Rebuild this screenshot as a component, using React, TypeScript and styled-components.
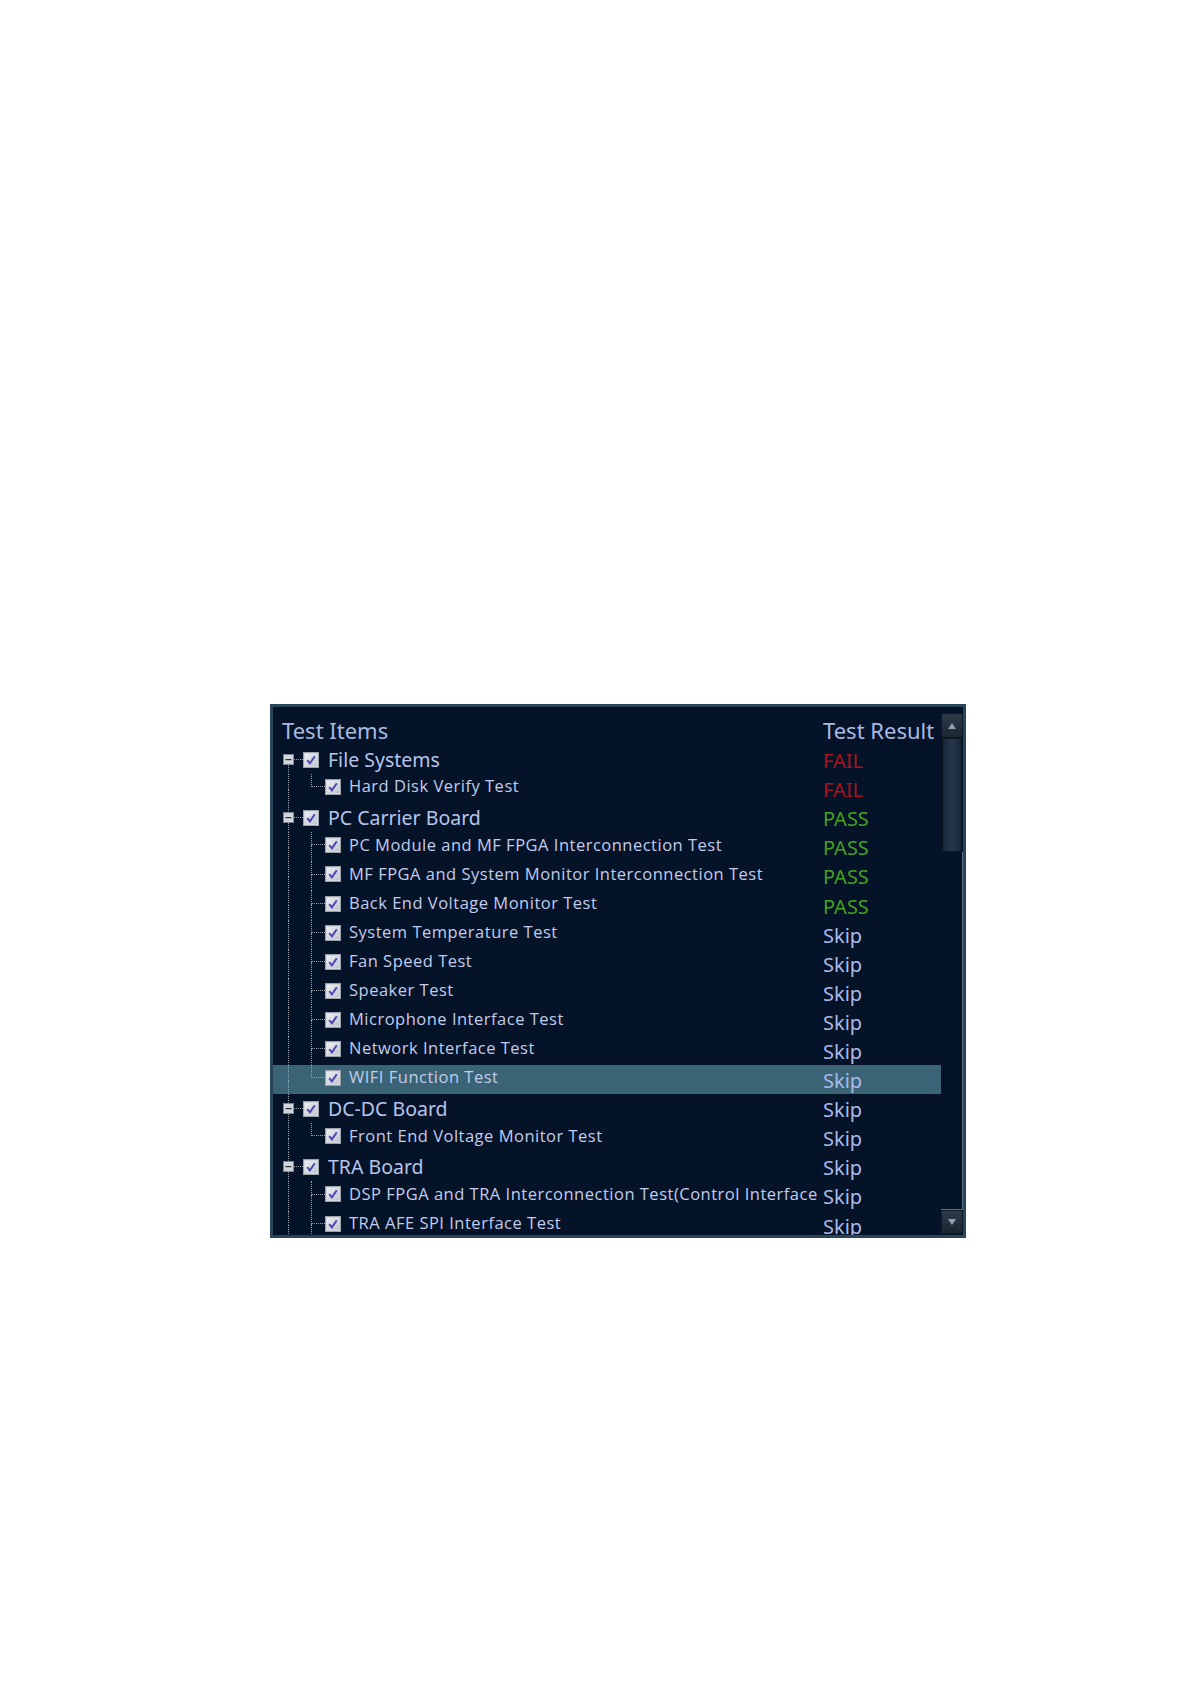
import styled, { createGlobalStyle } from "styled-components";

const LINE = "#9aa1aa";

const GlobalStyle = createGlobalStyle`
  html, body {
    margin: 0;
    background: #ffffff;
  }
  body {
    font-family: "Noto Sans", "Open Sans", sans-serif;
  }
`;

const Page = styled.div`
  box-sizing: border-box;
  min-height: 1684px;
  padding: 704px 0 0 270px;
`;

const Panel = styled.div`
  box-sizing: border-box;
  width: 696px;
  height: 534px;
  display: flex;
  border: 3px solid #2b4558;
  background: #051328;
  overflow: hidden;
`;

const List = styled.div`
  flex: 1;
  min-width: 0;
  padding-top: 8px;
  overflow: hidden;
`;

const HeaderRow = styled.div`
  display: grid;
  grid-template-columns: 550px 1fr;
  height: 30px;
  align-items: center;
  font-size: 22px;
  color: #a9bae2;
  white-space: nowrap;
`;

const HeaderCell = styled.div<{ $pad?: number }>`
  padding-left: ${(p) => p.$pad ?? 0}px;
`;

const Row = styled.div<{ $selected?: boolean }>`
  display: grid;
  grid-template-columns: 550px 1fr;
  height: 29.1px;
  background: ${(p) => (p.$selected ? "#3a6476" : "transparent")};
`;

const Tree = styled.div`
  display: flex;
  align-items: stretch;
  min-width: 0;
  overflow: hidden;
  white-space: nowrap;
`;

const Lane = styled.div<{ $w: number }>`
  flex: none;
  width: ${(p) => p.$w}px;
  display: flex;
  flex-direction: column;
`;

const Stub = styled.div<{ $x: number; $line: boolean; $branch?: boolean; $grow?: number }>`
  flex: ${(p) => p.$grow ?? 1};
  margin-left: ${(p) => p.$x}px;
  border-left: 1px dotted ${(p) => (p.$line ? LINE : "transparent")};
  border-bottom: 1px dotted ${(p) => (p.$branch ? LINE : "transparent")};
`;

const BoxLine = styled.div`
  flex: none;
  height: 11px;
  display: flex;
  align-items: center;
  padding-left: 10px;
`;

const Connector = styled.div`
  flex: 1;
  height: 0;
  border-top: 1px dotted ${LINE};
`;

const Check = styled.span<{ $lift?: number }>`
  flex: none;
  align-self: center;
  display: flex;
  padding-bottom: ${(p) => p.$lift ?? 0}px;
`;

const GroupLabel = styled.span`
  align-self: center;
  margin-left: 9px;
  font-size: 19.5px;
  color: #b7c5ec;
  line-height: 1;
`;

const ItemLabel = styled.span`
  align-self: center;
  margin-left: 8px;
  padding-bottom: 4px;
  font-family: "Open Sans", "Noto Sans", sans-serif;
  font-size: 16.5px;
  letter-spacing: 0.5px;
  color: #c2ccec;
  line-height: 1;
`;

type Status = "FAIL" | "PASS" | "Skip";

const statusColor: Record<Status, string> = {
  FAIL: "#a8131c",
  PASS: "#46a01f",
  Skip: "#aabaea",
};

const Result = styled.div<{ $status: Status }>`
  display: flex;
  align-items: center;
  padding-top: 3px;
  font-size: 20px;
  line-height: 1;
  color: ${(p) => statusColor[p.$status]};
  white-space: nowrap;
`;

const Scroll = styled.div`
  box-sizing: border-box;
  flex: none;
  width: 22px;
  display: flex;
  flex-direction: column;
  padding: 6px 0 1px;
`;

const ArrowBtn = styled.div<{ $h: number }>`
  flex: none;
  height: ${(p) => p.$h}px;
  display: flex;
  align-items: center;
  justify-content: center;
  background: linear-gradient(#2c3b48, #1a2531);
  border: 1px solid #101a24;
  border-radius: 2px;
  box-sizing: border-box;
`;

const Thumb = styled.div`
  flex: none;
  height: 114px;
  margin: 0 1px;
  border-radius: 3px;
  background: linear-gradient(to right, #172431, #26364a 50%, #172431);
  box-shadow: inset 0 0 0 1px #0d1721;
`;

const Track = styled.div`
  flex: 1;
  border-right: 1px solid #5d7080;
  border-bottom: 1px solid #5d7080;
`;

const CheckIcon = () => (
  <svg width="16" height="16" viewBox="0 0 16 16">
    <defs>
      <linearGradient id="cbfill" x1="0" y1="0" x2="1" y2="1">
        <stop offset="0" stopColor="#eef0f4" />
        <stop offset="1" stopColor="#bfc4ce" />
      </linearGradient>
    </defs>
    <rect x="0.5" y="0.5" width="15" height="15" fill="#d4d8df" stroke="#9ba1ab" />
    <rect x="2" y="2" width="12" height="12" fill="url(#cbfill)" />
    <path d="M4.2 8.2 L6.9 11.3 L11.8 4.2" fill="none" stroke="#4d46b2" strokeWidth="2" />
  </svg>
);

const MinusIcon = () => (
  <svg width="11" height="11" viewBox="0 0 11 11">
    <rect x="0.5" y="0.5" width="10" height="10" fill="#d2d6dd" stroke="#7e8693" />
    <rect x="2.5" y="5" width="6" height="1.2" fill="#27303c" />
  </svg>
);

const Arrow = ({ down }: { down?: boolean }) => (
  <svg width="8" height="6" viewBox="0 0 8 6">
    <path d={down ? "M0 0 H8 L4 6 Z" : "M0 6 H8 L4 0 Z"} fill="#8ea2b4" />
  </svg>
);

type Item = { name: string; result: Status; selected?: boolean };
type Group = { name: string; result: Status; items: Item[]; more?: boolean };

const groups: Group[] = [
  {
    name: "File Systems",
    result: "FAIL",
    items: [{ name: "Hard Disk Verify Test", result: "FAIL" }],
  },
  {
    name: "PC Carrier Board",
    result: "PASS",
    items: [
      { name: "PC Module and MF FPGA Interconnection Test", result: "PASS" },
      { name: "MF FPGA and System Monitor Interconnection Test", result: "PASS" },
      { name: "Back End Voltage Monitor Test", result: "PASS" },
      { name: "System Temperature Test", result: "Skip" },
      { name: "Fan Speed Test", result: "Skip" },
      { name: "Speaker Test", result: "Skip" },
      { name: "Microphone Interface Test", result: "Skip" },
      { name: "Network Interface Test", result: "Skip" },
      { name: "WIFI Function Test", result: "Skip", selected: true },
    ],
  },
  {
    name: "DC-DC Board",
    result: "Skip",
    items: [{ name: "Front End Voltage Monitor Test", result: "Skip" }],
  },
  {
    name: "TRA Board",
    result: "Skip",
    more: true,
    items: [
      { name: "DSP FPGA and TRA Interconnection Test(Control Interface", result: "Skip" },
      { name: "TRA AFE SPI Interface Test", result: "Skip" },
    ],
  },
];

const App = () => {
  return (
    <Page>
      <GlobalStyle />
      <Panel>
        <List>
          <HeaderRow>
            <HeaderCell $pad={9}>Test Items</HeaderCell>
            <HeaderCell>Test Result</HeaderCell>
          </HeaderRow>
          {groups.map((g, gi) => (
            <div key={g.name}>
              <Row>
                <Tree>
                  <Lane $w={30}>
                    <Stub $x={15} $line={gi > 0} />
                    <BoxLine>
                      <MinusIcon />
                      <Connector />
                    </BoxLine>
                    <Stub $x={15} $line />
                  </Lane>
                  <Check>
                    <CheckIcon />
                  </Check>
                  <GroupLabel>{g.name}</GroupLabel>
                </Tree>
                <Result $status={g.result}>{g.result}</Result>
              </Row>
              {g.items.map((it, ii) => {
                const last = ii === g.items.length - 1 && !g.more;
                return (
                  <Row key={it.name} $selected={it.selected}>
                    <Tree>
                      <Lane $w={30}>
                        <Stub $x={15} $line />
                        <Stub $x={15} $line />
                      </Lane>
                      <Lane $w={22}>
                        <Stub $x={8} $line $branch $grow={0.82} />
                        <Stub $x={8} $line={!last} />
                      </Lane>
                      <Check $lift={3}>
                        <CheckIcon />
                      </Check>
                      <ItemLabel>{it.name}</ItemLabel>
                    </Tree>
                    <Result $status={it.result}>{it.result}</Result>
                  </Row>
                );
              })}
            </div>
          ))}
        </List>
        <Scroll>
          <ArrowBtn $h={25}>
            <Arrow />
          </ArrowBtn>
          <Thumb />
          <Track />
          <ArrowBtn $h={24}>
            <Arrow down />
          </ArrowBtn>
        </Scroll>
      </Panel>
    </Page>
  );
};

export default App;
